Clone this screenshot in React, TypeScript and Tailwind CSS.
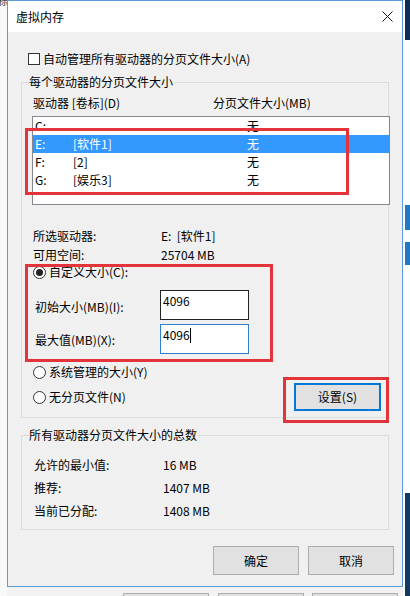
function Radio({ checked }: { checked?: boolean }) {
  return (
    <div className="w-[13px] h-[13px] rounded-full border border-[#333] bg-white flex items-center justify-center shrink-0">
      {checked ? <div className="w-[7px] h-[7px] rounded-full bg-[#222]" /> : null}
    </div>
  );
}

function Btn({ children, w = "w-[86px]" }: { children?: React.ReactNode; w?: string }) {
  return (
    <div className={`${w} h-[29px] border border-[#adadad] bg-[#e1e1e1] flex items-center justify-center shrink-0`}>
      {children}
    </div>
  );
}

const rows = [
  { d: "C:", l: "", s: "无", sel: false },
  { d: "E:", l: "[软件1]", s: "无", sel: true },
  { d: "F:", l: "[2]", s: "无", sel: false },
  { d: "G:", l: "[娱乐3]", s: "无", sel: false },
];

export default function App() {
  return (
    <div className="relative w-[410px] h-[596px] overflow-hidden bg-white flex font-['Noto_Sans_CJK_SC',sans-serif] text-[12px] leading-[16px] text-black">
      {/* left strip */}
      <div className="w-[7px] h-full bg-[#f8f8f8] overflow-hidden shrink-0">
        <div className="text-[10px] leading-[10px] -mt-[4px] -ml-[2px] text-[#444] whitespace-nowrap">标</div>
      </div>

      {/* middle column */}
      <div className="w-[396px] h-full flex flex-col shrink-0">
        <div className="h-[587px] border border-[#5d9bd6] bg-[#f0f0f0] flex flex-col shrink-0">
          {/* title bar */}
          <div className="h-[31px] bg-white flex items-center justify-between shrink-0">
            <span className="pl-[8px]">虚拟内存</span>
            <div className="w-[30px] flex justify-center">
              <svg width="11" height="11" viewBox="0 0 11 11">
                <path d="M0.5 0.5L10.5 10.5M10.5 0.5L0.5 10.5" stroke="#111" strokeWidth="1" fill="none" />
              </svg>
            </div>
          </div>

          {/* body */}
          <div className="flex flex-col px-[13px]">
            <div className="mt-[19px] h-[16px] ml-[7px] flex items-center gap-[3px]">
              <div className="w-[12px] h-[12px] border border-[#333] bg-white shrink-0" />
              <span>自动管理所有驱动器的分页文件大小(A)</span>
            </div>

            {/* group 1 */}
            <div className="relative mt-[15px] h-[336px] border border-[#dcdcdc] shrink-0 flex flex-col">
              <span className="absolute left-[7px] -top-[9px] bg-[#f0f0f0] pr-[1px]">每个驱动器的分页文件大小</span>
              <div className="mt-[12px] h-[16px] flex pl-[11px]">
                <span className="w-[180px]">驱动器 [卷标](D)</span>
                <span>分页文件大小(MB)</span>
              </div>
              <div className="mt-[5px] ml-[10px] w-[358px] h-[89px] border border-[#828790] bg-white shrink-0">
                {rows.map((r) => (
                  <div key={r.d} className={`h-[18px] flex items-center pl-[2px] ${r.sel ? "bg-[#3399ff] text-white" : ""}`}>
                    <span className="w-[38px]">{r.d}</span>
                    <span className="w-[174px]">{r.l}</span>
                    <span>{r.s}</span>
                  </div>
                ))}
              </div>
              <div className="mt-[21px] h-[19px] flex items-center pl-[11px]">
                <span className="w-[128px]">所选驱动器:</span>
                <span className="whitespace-pre">E:  [软件1]</span>
              </div>
              <div className="h-[19px] flex items-center pl-[11px]">
                <span className="w-[128px]">可用空间:</span>
                <span>25704 MB</span>
              </div>
              <div className="h-[16px] flex items-center pl-[11px] gap-[3px]">
                <Radio checked />
                <span>自定义大小(C):</span>
              </div>
              <div className="mt-[10px] h-[30px] flex items-start pl-[13px]">
                <span className="w-[125px] mt-[9px]">初始大小(MB)(I):</span>
                <div className="w-[89px] h-[30px] border border-[#222] bg-white pl-[2px] pt-[2px]">4096</div>
              </div>
              <div className="mt-[4px] h-[30px] flex items-start pl-[13px]">
                <span className="w-[125px] mt-[8px]">最大值(MB)(X):</span>
                <div className="w-[89px] h-[30px] border border-[#2e7fd2] bg-white pl-[2px] pt-[2px] flex items-start">
                  <span>4096</span>
                  <span className="w-[1px] h-[15px] bg-black mt-[1px]" />
                </div>
              </div>
              <div className="mt-[10px] h-[16px] flex items-center pl-[11px] gap-[3px]">
                <Radio />
                <span>系统管理的大小(Y)</span>
              </div>
              <div className="mt-[3px] h-[28px] flex items-center justify-between pl-[11px] pr-[7px]">
                <div className="flex items-center gap-[3px]">
                  <Radio />
                  <span>无分页文件(N)</span>
                </div>
                <div className="w-[87px] h-[28px] border-2 border-[#0078d7] bg-[#e1e1e1] flex items-center justify-center">
                  设置(S)
                </div>
              </div>
            </div>

            {/* group 2 */}
            <div className="relative mt-[17px] h-[95px] border border-[#dcdcdc] shrink-0 flex flex-col">
              <span className="absolute left-[7px] -top-[9px] bg-[#f0f0f0] pr-[1px]">所有驱动器分页文件大小的总数</span>
              <div className="mt-[17px] flex flex-col pl-[12px]">
                <div className="h-[23px] flex items-center">
                  <span className="w-[129px]">允许的最小值:</span>
                  <span>16 MB</span>
                </div>
                <div className="h-[23px] flex items-center">
                  <span className="w-[129px]">推荐:</span>
                  <span>1407 MB</span>
                </div>
                <div className="h-[23px] flex items-center">
                  <span className="w-[129px]">当前已分配:</span>
                  <span>1408 MB</span>
                </div>
              </div>
            </div>

            <div className="mt-[16px] -mr-[5px] flex justify-end gap-[9px]">
              <Btn>确定</Btn>
              <Btn>取消</Btn>
            </div>
          </div>
        </div>

        {/* below dialog */}
        <div className="flex-1 bg-[#f3f3f3] pt-[6px] flex items-start">
          <div className="ml-[116px] w-[86px] h-[20px] border border-[#adadad] bg-[#e1e1e1]" />
          <div className="ml-[9px] w-[86px] h-[20px] border border-[#adadad] bg-[#e1e1e1]" />
          <div className="ml-[8px] w-[86px] h-[20px] border border-[#adadad] bg-[#e1e1e1]" />
        </div>
      </div>

      {/* right strip */}
      <div className="w-[7px] h-full flex shrink-0">
        <div className="w-[2px] h-full bg-white" />
        <div className="w-[5px] h-full flex flex-col">
          <div className="h-[40px] bg-[#0f2d52]" />
          <div className="h-[165px] bg-white" />
          <div className="h-[25px] bg-[#1f78c8]" />
          <div className="h-[12px] bg-white" />
          <div className="h-[23px] bg-[#1f78c8]" />
          <div className="h-[228px] bg-white" />
          <div className="flex-1 bg-[#133862]" />
        </div>
      </div>

      {/* red annotation boxes */}
      <div className="absolute left-[25px] top-[128px] w-[324px] h-[67px] border-[3px] border-[#e3343a]" />
      <div className="absolute left-[25px] top-[264px] w-[248px] h-[98px] border-[3px] border-[#e3343a]" />
      <div className="absolute left-[283px] top-[377px] w-[106px] h-[46px] border-[3px] border-[#e3343a]" />
    </div>
  );
}
